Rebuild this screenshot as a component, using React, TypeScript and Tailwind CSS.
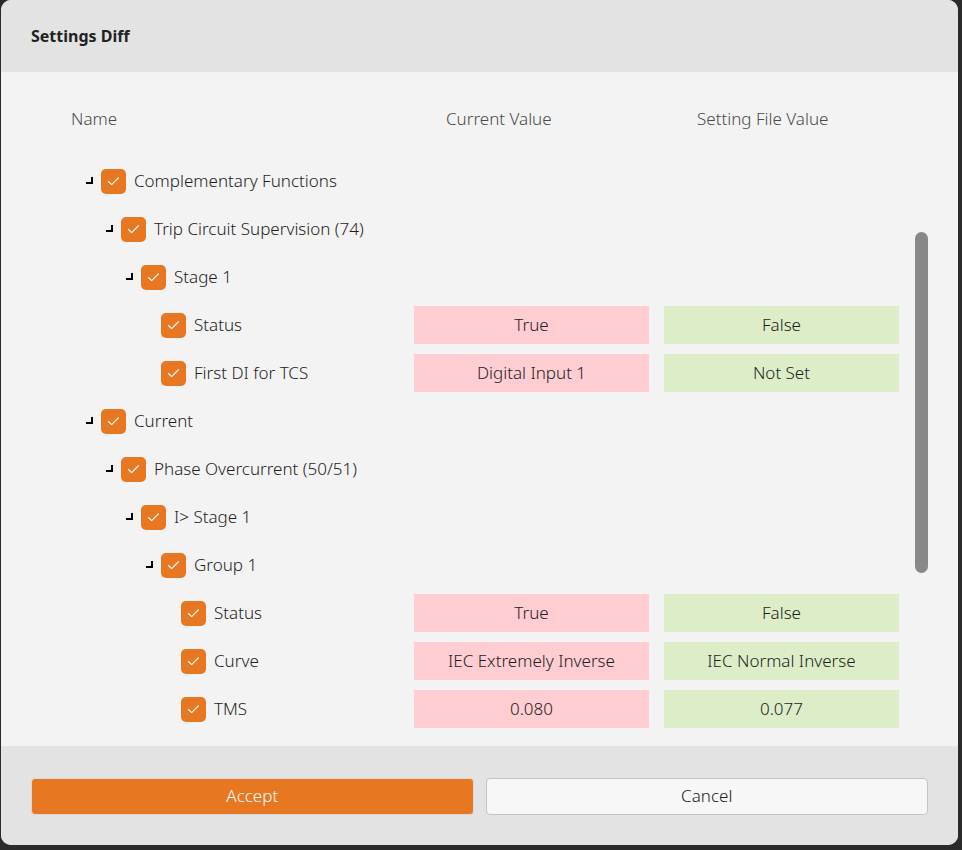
import { Check } from "lucide-react";

type Row = {
  level: number;
  label: string;
  branch?: boolean;
  current?: string;
  file?: string;
};

const rows: Row[] = [
  { level: 0, label: "Complementary Functions", branch: true },
  { level: 1, label: "Trip Circuit Supervision (74)", branch: true },
  { level: 2, label: "Stage 1", branch: true },
  { level: 3, label: "Status", current: "True", file: "False" },
  { level: 3, label: "First DI for TCS", current: "Digital Input 1", file: "Not Set" },
  { level: 0, label: "Current", branch: true },
  { level: 1, label: "Phase Overcurrent (50/51)", branch: true },
  { level: 2, label: "I> Stage 1", branch: true },
  { level: 3, label: "Group 1", branch: true },
  { level: 4, label: "Status", current: "True", file: "False" },
  { level: 4, label: "Curve", current: "IEC Extremely Inverse", file: "IEC Normal Inverse" },
  { level: 4, label: "TMS", current: "0.080", file: "0.077" },
];

const indent = ["pl-0", "pl-[20px]", "pl-[40px]", "pl-[60px]", "pl-[80px]"];

const TreeRow = ({ level, label, branch, current, file }: Row) => {
  return (
    <div className="flex items-center h-[48px]">
      <div className={`flex items-center w-[328px] ${indent[level]}`}>
        <div className="w-[8px] h-[25px] flex items-end pb-[10px]">
          {branch && <div className="w-[7px] h-[7px] border-r-[2.5px] border-b-[2.5px] border-black" />}
        </div>
        <div className="ml-[7px] w-[25px] h-[25px] rounded-[5px] bg-[#e87722] flex items-center justify-center">
          <Check className="w-[15px] h-[15px] text-white" strokeWidth={1.75} />
        </div>
        <span className="ml-[8px] text-[17px] font-light text-[#1e1e1e]">{label}</span>
      </div>
      {current !== undefined && (
        <div className="flex gap-[15px] font-light">
          <div className="w-[235px] h-[38px] bg-[#ffcdd2] flex items-center justify-center text-[17px] text-[#1e1e1e]">
            {current}
          </div>
          <div className="w-[235px] h-[38px] bg-[#dcedc8] flex items-center justify-center text-[17px] text-[#1e1e1e]">
            {file}
          </div>
        </div>
      )}
    </div>
  );
};

const App = () => {
  return (
    <div className="w-[962px] h-[850px] bg-[#2b2b2b] pl-[1px] font-['Noto_Sans',sans-serif]">
      <div className="w-[957px] h-[845px] rounded-[10px] overflow-hidden flex flex-col bg-[#f3f3f3]">
        <div className="h-[72px] bg-[#e3e3e3] flex items-center px-[30px]">
          <h2 className="text-[16px] font-bold text-[#222]">Settings Diff</h2>
        </div>

        <div className="relative flex-1 overflow-hidden pl-[70px] pt-[23px]">
          <div className="flex items-center h-[48px] text-[17px] font-light text-[#4a4a4a]">
            <div className="w-[375px]">Name</div>
            <div className="w-[251px]">Current Value</div>
            <div>Setting File Value</div>
          </div>
          <div className="mt-[14px] pl-[15px]">
            {rows.map((r, i) => (
              <TreeRow key={i} {...r} />
            ))}
          </div>
          <div className="absolute left-[914px] top-[160px] w-[13px] h-[341px] rounded-full bg-[#888]" />
        </div>

        <div className="h-[99px] bg-[#e3e3e3] flex items-center gap-[12px] px-[30px] pt-[1px]">
          <button className="flex-1 h-[37px] rounded-[4px] bg-[#e87722] border border-[#d9d9d9] text-white text-[17px] font-light">
            Accept
          </button>
          <button className="flex-1 h-[37px] rounded-[4px] bg-[#f7f7f7] border border-[#c4c4c4] text-[#222] text-[17px] font-light">
            Cancel
          </button>
        </div>
      </div>
    </div>
  );
};

export default App;
